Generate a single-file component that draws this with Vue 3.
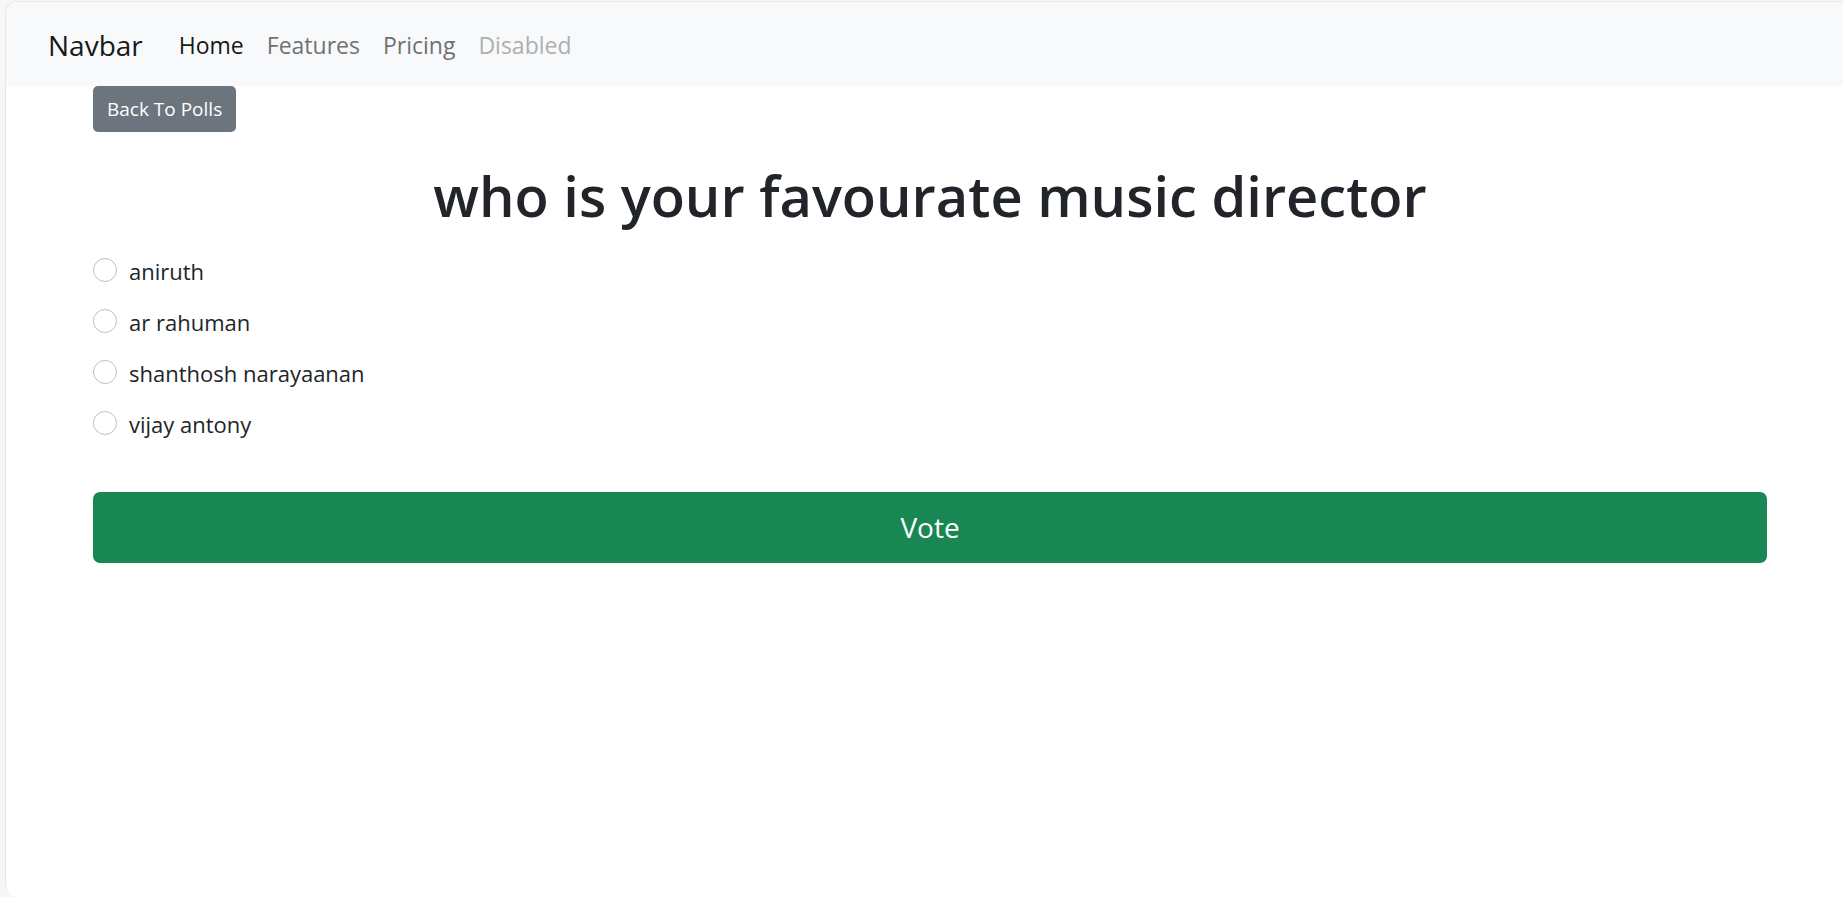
<script setup>
import { ref } from 'vue'

const links = [
  { label: 'Home', state: 'active' },
  { label: 'Features', state: '' },
  { label: 'Pricing', state: '' },
  { label: 'Disabled', state: 'disabled' },
]
const choices = ['aniruth', 'ar rahuman', 'shanthosh narayaanan', 'vijay antony']
const picked = ref(null)
</script>

<template>
  <div class="window">
    <nav class="navbar">
      <a class="brand" href="#">Navbar</a>
      <ul class="links">
        <li v-for="link in links" :key="link.label">
          <a :class="['link', link.state]" href="#" :aria-disabled="link.state === 'disabled'">{{ link.label }}</a>
        </li>
      </ul>
    </nav>
    <main class="container">
      <a class="back" href="#">Back To Polls</a>
      <h1 class="question">who is your favourate music director</h1>
      <form @submit.prevent>
        <div v-for="(choice, i) in choices" :key="choice" class="choice">
          <input :id="`choice${i}`" v-model="picked" class="radio" type="radio" name="choice" :value="choice" />
          <label :for="`choice${i}`">{{ choice }}</label>
        </div>
        <button class="vote" type="submit">Vote</button>
      </form>
    </main>
  </div>
</template>

<style>
body {
  margin: 0;
  background: #f7f7f7;
}
</style>

<style scoped>
.window {
  box-sizing: border-box;
  min-height: calc(100vh - 1px);
  margin: 1px 0 0 5px;
  border: 1px solid #e6e7e8;
  border-right: 0;
  border-bottom: 0;
  border-radius: 12px 0 0 12px;
  overflow: hidden;
  background: #fff;
  color: #212529;
  font-family: "Segoe UI", "Open Sans", "Noto Sans", sans-serif;
  font-size: 22px;
  line-height: 36px;
}
.navbar {
  display: flex;
  align-items: center;
  box-sizing: border-box;
  min-height: 84px;
  padding: 14px 42px 12px;
  background: #f8f9fa;
}
.brand {
  margin-right: 36px;
  color: #171819;
  font-size: 28px;
  text-decoration: none;
}
.links {
  display: flex;
  gap: 23px;
  margin: 0;
  padding: 0;
  font-size: 23px;
  list-style: none;
}
.link {
  color: #707172;
  text-decoration: none;
}
.link.active {
  color: #171819;
}
.link.disabled {
  color: #aeafaf;
  pointer-events: none;
}
.container {
  padding: 0 76px 0 87px;
}
.back {
  display: block;
  width: fit-content;
  padding: 5px 14px;
  border-radius: 5px;
  background: #6c757d;
  color: #fff;
  font-size: 19px;
  text-decoration: none;
}
.question {
  margin: 27px 0 25px;
  font-size: 56px;
  font-weight: 600;
  line-height: 72px;
  text-align: center;
}
.choice {
  display: flex;
  align-items: flex-start;
  gap: 12px;
  margin-bottom: 21px;
  line-height: 30px;
}
.radio {
  appearance: none;
  box-sizing: border-box;
  width: 24px;
  height: 24px;
  margin: 2px 0 0;
  border: 1px solid #bfbfbf;
  border-radius: 50%;
  background: #fff;
}
.radio:checked {
  border: 7px solid #0d6efd;
}
.vote {
  display: block;
  width: 100%;
  margin-top: 53px;
  padding: 12px 24px;
  border: 0;
  border-radius: 7px;
  background: #198754;
  color: #fff;
  font-family: inherit;
  font-size: 28px;
  line-height: 47px;
}
</style>
